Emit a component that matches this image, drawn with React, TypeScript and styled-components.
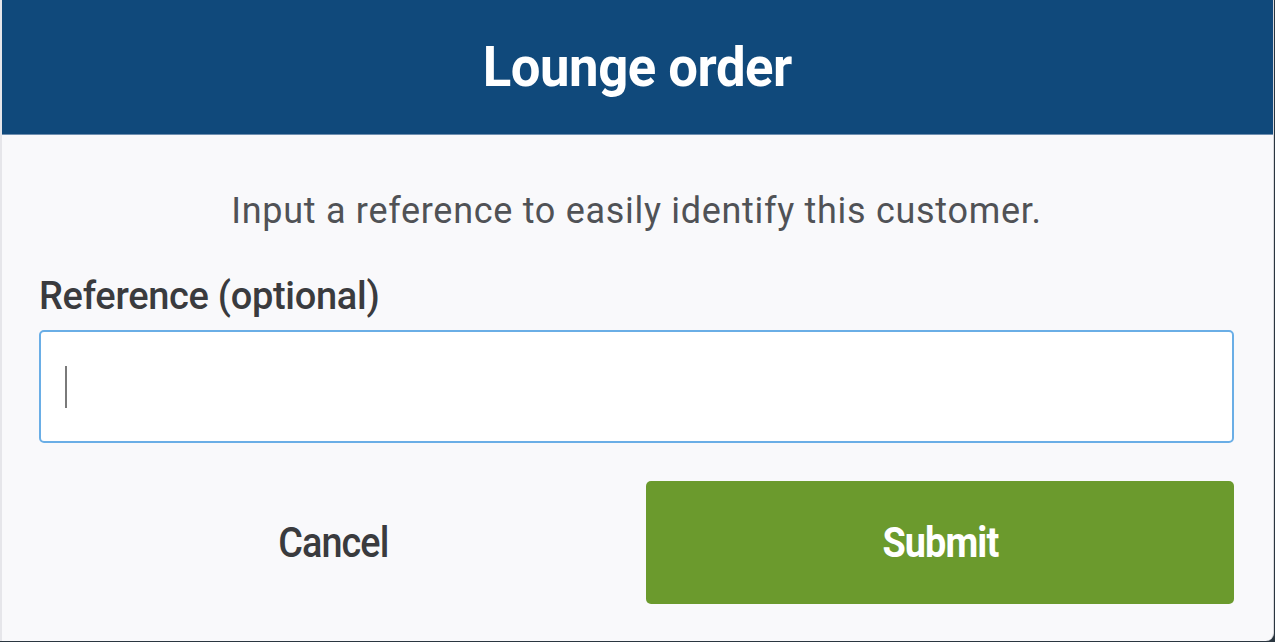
import React, { useState } from 'react';
import styled, { createGlobalStyle } from 'styled-components';

const GlobalStyle = createGlobalStyle`
  html, body {
    margin: 0;
    padding: 0;
    background: #2a3640;
  }
  body {
    font-family: Roboto, "Noto Sans", "Liberation Sans", sans-serif;
    -webkit-font-smoothing: antialiased;
  }
`;

const Dialog = styled.div`
  width: 1274px;
  height: 641px;
  background: #f9f9fb;
  border-left: 2px solid #e6e6ea;
  border-right: 1px solid #d8d8dc;
  border-radius: 0 0 8px 0;
  box-sizing: border-box;
  display: flex;
  flex-direction: column;
  overflow: hidden;
`;

const Header = styled.header`
  height: 135px;
  background: #10497b;
  display: flex;
  align-items: center;
  justify-content: center;
  border-bottom: 1px solid #6f8fb0;
  box-sizing: border-box;
`;

const Title = styled.h1`
  margin: 0;
  color: #ffffff;
  font-size: 56px;
  font-weight: 700;
  letter-spacing: -0.5px;
  transform: scaleX(0.94);
`;

const Body = styled.div`
  padding: 0 39px 0 37px;
  display: flex;
  flex-direction: column;
`;

const Intro = styled.p`
  margin: 52px 0 0;
  text-align: center;
  color: #505256;
  font-size: 36px;
  font-weight: 400;
  letter-spacing: 0.7px;
  line-height: 48px;
`;

const Label = styled.label`
  margin-top: 39px;
  color: #3a3b3e;
  font-size: 38px;
  font-weight: 500;
  letter-spacing: -0.3px;
  line-height: 44px;
`;

const Field = styled.div`
  margin-top: 12px;
  height: 113px;
  background: #ffffff;
  border: 2px solid #6aaee6;
  border-radius: 5px;
  box-sizing: border-box;
  display: flex;
  align-items: center;
  padding-left: 24px;
`;

const Input = styled.input`
  flex: 1;
  height: 100%;
  border: none;
  outline: none;
  background: transparent;
  font-family: inherit;
  font-size: 34px;
  color: #333;
  caret-color: #777;
`;

const Caret = styled.span`
  width: 2px;
  height: 42px;
  background: #7a7a7a;
  margin-right: -2px;
`;

const Actions = styled.div`
  margin-top: 38px;
  display: grid;
  grid-template-columns: 1fr 1fr;
  gap: 19px;
  height: 123px;
`;

const ActionButton = styled.button<{ $primary?: boolean }>`
  border: none;
  border-radius: 5px;
  font-family: inherit;
  font-size: 42px;
  font-weight: ${({ $primary }) => ($primary ? 700 : 500)};
  letter-spacing: -1px;
  color: ${({ $primary }) => ($primary ? '#ffffff' : '#3a3b3e')};
  background: ${({ $primary }) => ($primary ? '#6b9a2d' : 'transparent')};
  cursor: pointer;
  padding: 0;
`;

const ButtonText = styled.span`
  display: inline-block;
  transform: scaleX(0.9);
`;

export default function App() {
  const [reference, setReference] = useState('');

  return (
    <>
      <GlobalStyle />
      <Dialog>
        <Header>
          <Title>Lounge order</Title>
        </Header>
        <Body>
          <Intro>Input a reference to easily identify this customer.</Intro>
          <Label htmlFor="reference">Reference (optional)</Label>
          <Field>
            {reference === '' && <Caret />}
            <Input
              id="reference"
              value={reference}
              onChange={(e) => setReference(e.target.value)}
            />
          </Field>
          <Actions>
            <ActionButton>
              <ButtonText>Cancel</ButtonText>
            </ActionButton>
            <ActionButton $primary>
              <ButtonText>Submit</ButtonText>
            </ActionButton>
          </Actions>
        </Body>
      </Dialog>
    </>
  );
}
